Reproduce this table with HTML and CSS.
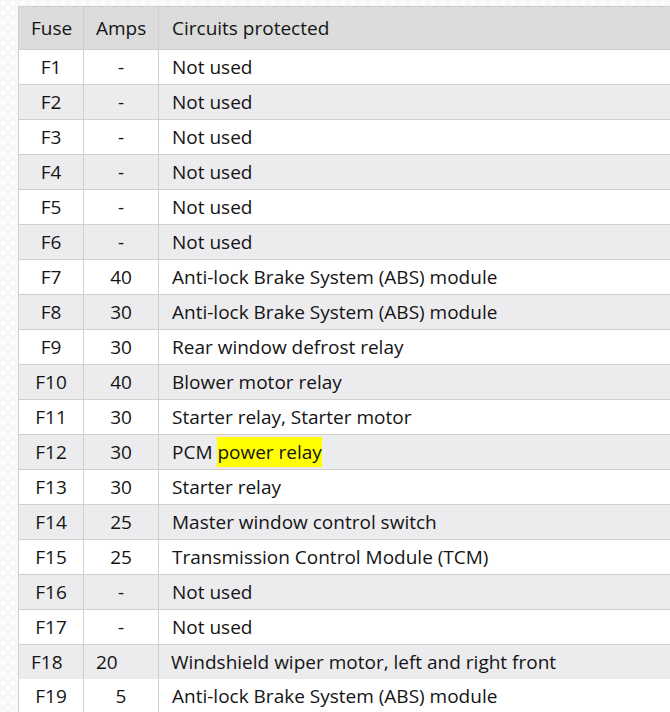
FILE: index.html
```html
<!DOCTYPE html>
<html>
<head>
<meta charset="utf-8">
<link rel="stylesheet" href="styles.css">
</head>
<body>
<div class="page">
<table class="fuses">
<colgroup><col class="w-fuse"><col class="w-amps"><col class="w-desc"></colgroup>
<thead>
<tr><th class="c-fuse">Fuse</th><th class="c-amps">Amps</th><th class="c-desc">Circuits protected</th></tr>
</thead>
<tbody>
<tr><td class="c-fuse">F1</td><td class="c-amps">-</td><td class="c-desc">Not used</td></tr>
<tr><td class="c-fuse">F2</td><td class="c-amps">-</td><td class="c-desc">Not used</td></tr>
<tr><td class="c-fuse">F3</td><td class="c-amps">-</td><td class="c-desc">Not used</td></tr>
<tr><td class="c-fuse">F4</td><td class="c-amps">-</td><td class="c-desc">Not used</td></tr>
<tr><td class="c-fuse">F5</td><td class="c-amps">-</td><td class="c-desc">Not used</td></tr>
<tr><td class="c-fuse">F6</td><td class="c-amps">-</td><td class="c-desc">Not used</td></tr>
<tr><td class="c-fuse">F7</td><td class="c-amps">40</td><td class="c-desc">Anti-lock Brake System (ABS) module</td></tr>
<tr><td class="c-fuse">F8</td><td class="c-amps">30</td><td class="c-desc">Anti-lock Brake System (ABS) module</td></tr>
<tr><td class="c-fuse">F9</td><td class="c-amps">30</td><td class="c-desc">Rear window defrost relay</td></tr>
<tr><td class="c-fuse">F10</td><td class="c-amps">40</td><td class="c-desc">Blower motor relay</td></tr>
<tr><td class="c-fuse">F11</td><td class="c-amps">30</td><td class="c-desc">Starter relay, Starter motor</td></tr>
<tr><td class="c-fuse">F12</td><td class="c-amps">30</td><td class="c-desc">PCM <mark class="hl">power relay</mark></td></tr>
<tr><td class="c-fuse">F13</td><td class="c-amps">30</td><td class="c-desc">Starter relay</td></tr>
<tr><td class="c-fuse">F14</td><td class="c-amps">25</td><td class="c-desc">Master window control switch</td></tr>
<tr><td class="c-fuse">F15</td><td class="c-amps">25</td><td class="c-desc">Transmission Control Module (TCM)</td></tr>
<tr><td class="c-fuse">F16</td><td class="c-amps">-</td><td class="c-desc">Not used</td></tr>
<tr><td class="c-fuse">F17</td><td class="c-amps">-</td><td class="c-desc">Not used</td></tr>
<tr class="odd-row"><td class="c-fuse">F18</td><td class="c-amps">20</td><td class="c-desc">Windshield wiper motor, left and right front</td></tr>
<tr class="last-row"><td class="c-fuse">F19</td><td class="c-amps">5</td><td class="c-desc">Anti-lock Brake System (ABS) module</td></tr>
</tbody>
</table>
</div>
</body>
</html>
```

FILE: styles.css
```css
html, body {
  margin: 0;
  padding: 0;
  overflow: hidden;
}
body {
  background-color: #f7f7f7;
  background-image:
    radial-gradient(circle at 3px 3px, #ffffff 2px, transparent 2.5px),
    radial-gradient(circle at 8px 8px, #fcfcfc 2px, transparent 2.5px);
  background-size: 10px 10px;
  font-family: "Open Sans", "Noto Sans", sans-serif;
  color: #141414;
}
.page {
  padding: 6px 0 0 18px;
}
.fuses {
  border-collapse: collapse;
  table-layout: fixed;
  width: 720px;
  font-size: 19px;
  background: #fff;
}
.w-fuse { width: 65px; }
.w-amps { width: 75px; }
.fuses th,
.fuses td {
  border: 1px solid #cfcfcf;
  font-weight: normal;
  padding: 0 12px;
  white-space: nowrap;
  overflow: hidden;
}
.fuses th {
  background: #dcdcdc;
  height: 42px;
  text-align: left;
}
.fuses th.c-desc,
.fuses td.c-desc {
  padding-left: 13px;
}
.fuses td {
  height: 34px;
}
.fuses tbody tr:nth-child(even) td {
  background: #ececef;
}
td.c-fuse,
td.c-amps {
  text-align: center;
  padding: 0;
}
.fuses tbody tr.odd-row td {
  background: #ececef;
  border-bottom: none;
  text-align: left;
  padding-left: 12px;
}
.fuses tbody tr.last-row td {
  border-top: none;
  background: #fff;
}
.hl {
  background: #ffff00;
  color: inherit;
  padding: 2px 0;
}
```
